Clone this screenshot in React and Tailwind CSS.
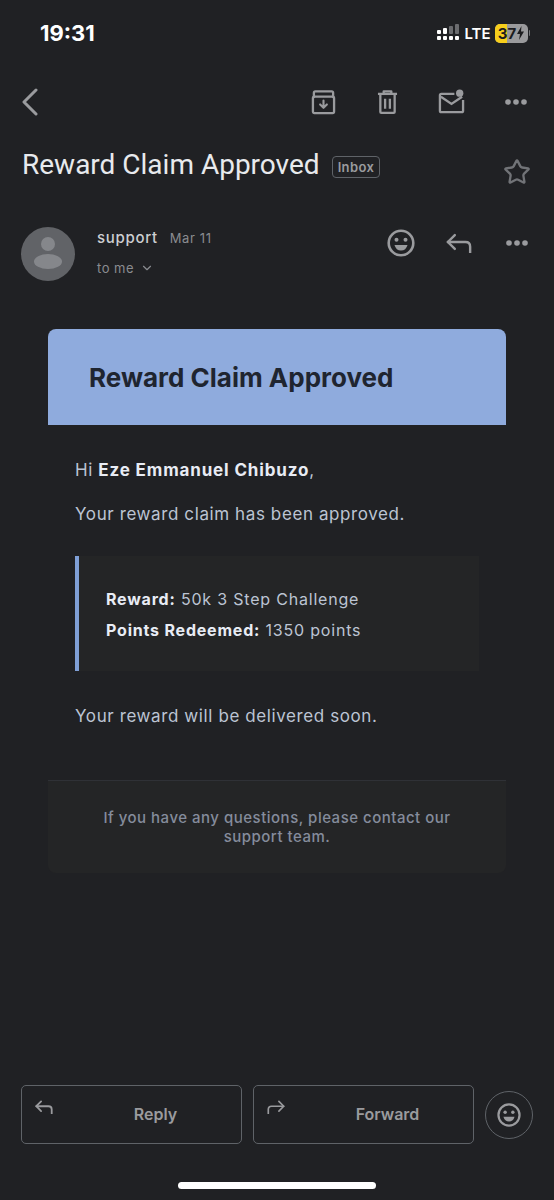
import { ChevronDown, Star } from 'lucide-react'

function SignalBars() {
  return (
    <svg width="24" height="18" viewBox="0 0 24 18" fill="#fff">
      <rect x="1" y="6" width="4" height="4" rx="1" />
      <rect x="1" y="12" width="4" height="4" rx="1" />
      <rect x="7" y="4" width="4" height="6" rx="1" />
      <rect x="7" y="12" width="4" height="4" rx="1" />
      <rect x="13" y="2" width="4" height="8" rx="1" fill="#6b6c6f" />
      <rect x="13" y="12" width="4" height="4" rx="1" />
      <rect x="19" y="0" width="4" height="10" rx="1" fill="#6b6c6f" />
      <rect x="19" y="12" width="4" height="4" rx="1" />
    </svg>
  )
}

function Battery() {
  return (
    <div className="flex items-center">
      <div className="relative flex h-[19px] w-[33px] items-center justify-center overflow-hidden rounded-[5px] bg-[#9a9a9c]">
        <div className="absolute inset-y-0 left-0 w-[12px] bg-[#f7ce1b]"></div>
        <span className="relative text-[15px] font-bold leading-none text-[#1c1c1e]">37</span>
        <svg className="relative ml-[1px]" width="7" height="14" viewBox="0 0 7 14" fill="#1c1c1e">
          <path d="M4.500 0 0 8h3l-1 6 5-8.500H4z" />
        </svg>
      </div>
      <div className="ml-[1px] h-[6px] w-[1.5px] rounded-r bg-[#77787a]"></div>
    </div>
  )
}

function BackChevron() {
  return (
    <svg width="16" height="28" viewBox="0 0 16 28" fill="none" stroke="#9a9b9e" strokeWidth="3" strokeLinecap="round" strokeLinejoin="round">
      <path d="M14 2 2 14l12 12" />
    </svg>
  )
}

function ArchiveIcon() {
  return (
    <svg width="25" height="26" viewBox="0 0 26 26" fill="none" stroke="#9a9b9e" strokeWidth="2.400" strokeLinejoin="round" strokeLinecap="round">
      <path d="M3 8V3.500Q3 2 4.500 2h17Q23 2 23 3.500V8" />
      <rect x="2" y="7.500" width="22" height="17" rx="1.500" />
      <path d="M13 11.500v7M9.500 15.500l3.500 3.500 3.500-3.500" strokeWidth="2.200" />
    </svg>
  )
}

function TrashIcon() {
  return (
    <svg width="21" height="26" viewBox="0 0 22 26" fill="none" stroke="#9a9b9e" strokeWidth="2.400" strokeLinejoin="round">
      <path d="M1 4.500h20" />
      <path d="M7 4V1.800h8V4" />
      <path d="M3.500 5v18.500q0 1 1 1h13q1 0 1-1V5" />
      <path d="M8.500 9.500v10.500M13.500 9.500v10.500" />
    </svg>
  )
}

function MailDotIcon() {
  return (
    <svg width="27" height="26" viewBox="0 0 28 26" fill="none">
      <path d="M17 4.500H3.500Q2 4.500 2 6v16q0 1.500 1.500 1.500h21q1.500 0 1.500-1.500V11" stroke="#9a9b9e" strokeWidth="2.400" />
      <path d="M3 7.500l11 7.500 11-7.500" stroke="#9a9b9e" strokeWidth="2.400" />
      <circle cx="22.500" cy="3.800" r="3.800" fill="#9a9b9e" />
    </svg>
  )
}

function ReplyArrow({ size = 28, color = '#9a9b9e', width = 2.6 }) {
  return (
    <svg width={size} height={size * 0.8} viewBox="0 0 28 22" fill="none" stroke={color} strokeWidth={width} strokeLinecap="round" strokeLinejoin="round">
      <path d="M9.500 2 2 9.500l7.500 7.500" />
      <path d="M2 9.500h19q5 0 5 5V21" />
    </svg>
  )
}

function ForwardArrow({ size = 18, color = '#9a9b9e', width = 2.6 }) {
  return (
    <svg width={size} height={size * 0.8} viewBox="0 0 28 22" fill="none" stroke={color} strokeWidth={width} strokeLinecap="round" strokeLinejoin="round">
      <path d="M18.500 2 26 9.500 18.500 17" />
      <path d="M26 9.500H7q-5 0-5 5V21" />
    </svg>
  )
}

function SmileIcon({ size = 28, color = '#9a9b9e' }) {
  return (
    <svg width={size} height={size} viewBox="0 0 28 28" fill="none">
      <circle cx="14" cy="14" r="12.300" stroke={color} strokeWidth="2.600" />
      <circle cx="9.500" cy="10.800" r="2" fill={color} />
      <circle cx="18.500" cy="10.800" r="2" fill={color} />
      <path d="M7.500 16h13q-1.500 5.500-6.500 5.500T7.500 16z" fill={color} />
    </svg>
  )
}

function Avatar() {
  return (
    <div className="flex h-[54px] w-[54px] shrink-0 flex-col items-center overflow-hidden rounded-full bg-[#616367]">
      <div className="mt-[10px] h-[14px] w-[14px] rounded-full bg-[#85878b]"></div>
      <div className="mt-[3px] h-[15px] w-[28px] rounded-[50%] bg-[#85878b]"></div>
    </div>
  )
}

function Dots() {
  return (
    <svg width="22" height="6" viewBox="0 0 22 6" fill="#9a9b9e">
      <circle cx="3" cy="3" r="2.800" />
      <circle cx="11" cy="3" r="2.800" />
      <circle cx="19" cy="3" r="2.800" />
    </svg>
  )
}

export default function App() {
  return (
    <div className="flex h-[1200px] w-[554px] flex-col overflow-hidden bg-[#202124] font-['Inter',sans-serif]">
      {/* status bar */}
      <div className="flex items-center justify-between pl-[40px] pr-[24px] pt-[20px]">
        <span className="text-[22px] font-bold leading-[26px] text-white">19:31</span>
        <div className="flex items-center gap-[4px]">
          <SignalBars />
          <span className="text-[15px] font-semibold leading-none text-white">LTE</span>
          <Battery />
        </div>
      </div>

      {/* toolbar */}
      <div className="mt-[42px] flex items-center justify-between pl-[22px] pr-[27px]">
        <BackChevron />
        <div className="flex items-center">
          <ArchiveIcon />
          <div className="ml-[41px]"><TrashIcon /></div>
          <div className="ml-[40px]"><MailDotIcon /></div>
          <div className="ml-[40px]"><Dots /></div>
        </div>
      </div>

      {/* subject */}
      <div className="mt-[31px] flex items-start justify-between pl-[22px] pr-[23px]">
        <div className="flex items-center gap-[12px]">
          <h1 className="font-['Roboto',sans-serif] text-[28px] font-normal leading-[36px] text-[#e8eaed]">Reward Claim Approved</h1>
          <span className="mt-[4px] rounded-[4px] border border-[#5f6368] px-[5px] text-[13px] font-semibold leading-[20px] tracking-[0.4px] text-[#9a9b9e]">Inbox</span>
        </div>
        <Star size={28} strokeWidth={2} color="#717377" className="mt-[11px]" />
      </div>

      {/* sender row */}
      <div className="mt-[41px] flex items-start pl-[21px] pr-[26px]">
        <Avatar />
        <div className="ml-[22px]">
          <div className="flex items-baseline gap-[12px]">
            <span className="text-[15px] font-medium tracking-[0.7px] text-[#cdcfd2]">support</span>
            <span className="text-[13px] tracking-[0.6px] text-[#8a8c90]">Mar 11</span>
          </div>
          <div className="mt-[9px] flex items-center gap-[6px] text-[13px] tracking-[0.5px] text-[#8a8c90]">
            to me
            <ChevronDown size={14} color="#8a8c90" />
          </div>
        </div>
        <div className="ml-auto mt-[2px] flex items-center">
          <SmileIcon />
          <div className="ml-[31px]"><ReplyArrow size={26} /></div>
          <div className="ml-[34px]"><Dots /></div>
        </div>
      </div>

      {/* message */}
      <div className="mx-[48px] mt-[48px]">
        <div className="rounded-t-[8px] bg-[#8fabdd] px-[41px] pb-[31px] pt-[33px]">
          <h2 className="text-[26px] font-bold leading-[32px] text-[#1f2530]">Reward Claim Approved</h2>
        </div>
        <div className="px-[27px] pb-[52px] pt-[33px] text-[17px] leading-[24px] tracking-[0.6px] text-[#bcc4d3]">
          <p>Hi <strong className="font-bold tracking-[0.85px] text-[#e8ecf4]">Eze Emmanuel Chibuzo</strong>,</p>
          <p className="mt-[20px]">Your reward claim has been approved.</p>
          <div className="mt-[30px] border-l-4 border-[#7f9fd6] bg-[#242526] pb-[29px] pl-[27px] pt-[31px] text-[16px] tracking-[0.8px]">
            <p><strong className="font-bold text-[#e8ecf4]">Reward:</strong> 50k 3 Step Challenge</p>
            <p className="mt-[7px]"><strong className="font-bold text-[#e8ecf4]">Points Redeemed:</strong> 1350 points</p>
          </div>
          <p className="mt-[33px]">Your reward will be delivered soon.</p>
        </div>
        <div className="rounded-b-[8px] border-t border-[#2f3136] bg-[#242526] px-[40px] pb-[27px] pt-[27px] text-center text-[15px] font-medium leading-[19px] tracking-[0.5px] text-[#858c9c]">
          If you have any questions, please contact our support team.
        </div>
      </div>

      {/* bottom actions */}
      <div className="mt-auto flex items-center pl-[21px] pr-[21px]">
        <button className="relative h-[59px] w-[221px] rounded-[5px] border border-[#5f6368] pb-[2px] pl-[48px] text-[16px] font-semibold text-[#9a9b9e]">
          <span className="absolute left-[13px] top-[14px]"><ReplyArrow size={18} width={2.8} /></span>
          Reply
        </button>
        <button className="relative ml-[11px] h-[59px] w-[221px] rounded-[5px] border border-[#5f6368] pb-[2px] pl-[48px] text-[16px] font-semibold text-[#9a9b9e]">
          <span className="absolute left-[13px] top-[14px]"><ForwardArrow /></span>
          Forward
        </button>
        <div className="ml-[11px] flex h-[48px] w-[48px] items-center justify-center rounded-full border border-[#5f6368]">
          <SmileIcon size={24} />
        </div>
      </div>

      {/* home indicator */}
      <div className="mx-auto mb-[11px] mt-[38px] h-[7px] w-[198px] rounded-full bg-white"></div>
    </div>
  )
}
